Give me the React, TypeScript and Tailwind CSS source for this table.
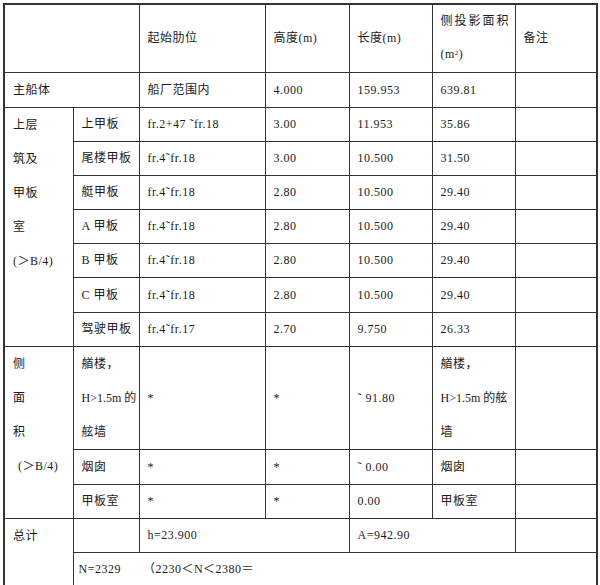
import React from "react";

// Row data for the superstructure block (上层建筑及甲板室)
interface DeckRow {
	name: string;
	frames: string;
	height: string;
	length: string;
	area: string;
}

const deckRows: DeckRow[] = [
	{ name: "上甲板", frames: "fr.2+47 ˜fr.18", height: "3.00", length: "11.953", area: "35.86" },
	{ name: "尾楼甲板", frames: "fr.4˜fr.18", height: "3.00", length: "10.500", area: "31.50" },
	{ name: "艇甲板", frames: "fr.4˜fr.18", height: "2.80", length: "10.500", area: "29.40" },
	{ name: "A 甲板", frames: "fr.4˜fr.18", height: "2.80", length: "10.500", area: "29.40" },
	{ name: "B 甲板", frames: "fr.4˜fr.18", height: "2.80", length: "10.500", area: "29.40" },
	{ name: "C 甲板", frames: "fr.4˜fr.18", height: "2.80", length: "10.500", area: "29.40" },
	{ name: "驾驶甲板", frames: "fr.4˜fr.17", height: "2.70", length: "9.750", area: "26.33" },
];

const td = "border border-[#333] pl-[8px] pr-0 py-0 align-middle whitespace-nowrap overflow-hidden";
const tdTop = "border border-[#333] pl-[8px] pr-0 py-0 align-top leading-[34px] whitespace-nowrap overflow-hidden";

export default function App() {
	return (
		<div className="w-[600px] h-[585px] bg-white pl-[3px] pt-[3px] font-['Liberation_Serif','Noto_Sans_CJK_SC',serif] text-[12px] tracking-[0.5px] text-[#1c1c1c]">
			<table className="table-fixed border-collapse border-2 border-[#333] w-[593px]">
				<colgroup>
					<col className="w-[69px]" />
					<col className="w-[66px]" />
					<col className="w-[126px]" />
					<col className="w-[84px]" />
					<col className="w-[83px]" />
					<col className="w-[83px]" />
					<col className="w-[82px]" />
				</colgroup>
				<tbody>
					<tr className="h-[68px]">
						<td className={td} colSpan={2}></td>
						<td className={td}>起始肋位</td>
						<td className={td}>高度(m)</td>
						<td className={td}>长度(m)</td>
						<td className={td}>
							<div className="leading-[33px] tracking-[2px]">侧投影面积</div>
							<div className="leading-[33px]">
								(m<sup className="text-[7px]">2</sup>)
							</div>
						</td>
						<td className={td}>备注</td>
					</tr>
					<tr className="h-[35px]">
						<td className={td} colSpan={2}>主船体</td>
						<td className={td}>船厂范围内</td>
						<td className={td}>4.000</td>
						<td className={td}>159.953</td>
						<td className={td}>639.81</td>
						<td className={td}></td>
					</tr>
					{deckRows.map((row, i) => (
						<tr key={row.name} className={i === 5 ? "h-[35px]" : "h-[34px]"}>
							{i === 0 && (
								<td className={tdTop} rowSpan={deckRows.length}>
									<div>上层</div>
									<div>筑及</div>
									<div>甲板</div>
									<div>室</div>
									<div>(＞B/4)</div>
								</td>
							)}
							<td className={td}>{row.name}</td>
							<td className={td}>{row.frames}</td>
							<td className={td}>{row.height}</td>
							<td className={td}>{row.length}</td>
							<td className={td}>{row.area}</td>
							<td className={td}></td>
						</tr>
					))}
					<tr className="h-[101px]">
						<td className={tdTop} rowSpan={3}>
							<div>侧</div>
							<div>面</div>
							<div>积</div>
							<div className="pl-[5px]">(＞B/4)</div>
						</td>
						<td className={tdTop}>
							<div>艏楼，</div>
							<div className="tracking-normal">H&gt;1.5m 的</div>
							<div>舷墙</div>
						</td>
						<td className={td}>*</td>
						<td className={td}>*</td>
						<td className={td}>˜ 91.80</td>
						<td className={tdTop}>
							<div>艏楼，</div>
							<div className="tracking-normal">H&gt;1.5m 的舷</div>
							<div>墙</div>
						</td>
						<td className={td}></td>
					</tr>
					<tr className="h-[35px]">
						<td className={td}>烟囱</td>
						<td className={td}>*</td>
						<td className={td}>*</td>
						<td className={td}>˜ 0.00</td>
						<td className={td}>烟囱</td>
						<td className={td}></td>
					</tr>
					<tr className="h-[34px]">
						<td className={td}>甲板室</td>
						<td className={td}>*</td>
						<td className={td}>*</td>
						<td className={td}>0.00</td>
						<td className={td}>甲板室</td>
						<td className={td}></td>
					</tr>
					<tr className="h-[34px]">
						<td className={tdTop} rowSpan={2}>总计</td>
						<td className={td}></td>
						<td className={td} colSpan={2}>h=23.900</td>
						<td className={td} colSpan={2}>A=942.90</td>
						<td className={td}></td>
					</tr>
					<tr className="h-[34px]">
						<td className="border border-[#333] pl-[5px] py-0 align-middle whitespace-nowrap" colSpan={6}>
							<span>N=2329</span>
							<span className="ml-[22px]">（2230＜N＜2380＝</span>
						</td>
					</tr>
				</tbody>
			</table>
		</div>
	);
}
